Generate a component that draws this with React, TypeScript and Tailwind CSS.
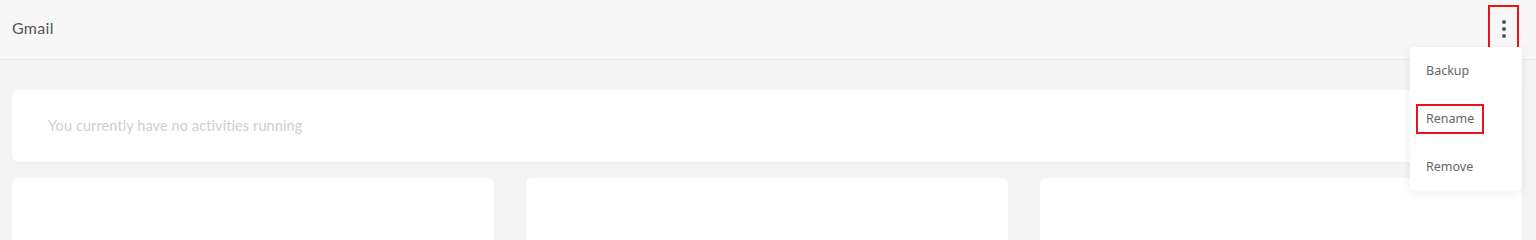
export default function App() {
  const items = ['Backup', 'Rename', 'Remove']

  return (
    <div className="h-screen overflow-hidden bg-[#f4f4f4] font-['Lato',sans-serif]">
      <header className="h-[60px] flex items-center justify-between pl-3 pr-[17px] border-b border-[#e9e9e9] bg-[#f7f7f7]">
        <span className="-mt-[3px] text-[16px] text-[#555] tracking-[0.3px]">Gmail</span>
        <div className="relative -mt-[2px]">
          <button className="w-[31px] h-[47px] border-2 border-[#e8141c] flex flex-col items-center justify-center gap-[3px]">
            <span className="w-[4px] h-[4px] rounded-full bg-[#555]" />
            <span className="w-[4px] h-[4px] rounded-full bg-[#555]" />
            <span className="w-[4px] h-[4px] rounded-full bg-[#555]" />
          </button>
          <div className="absolute -right-[3px] top-[42px] w-[112px] bg-white rounded-[4px] shadow-[0_2px_10px_rgba(0,0,0,0.08)] z-10 font-['Noto_Sans',sans-serif]">
            {items.map((item) =>
              item === 'Rename' ? (
                <div key={item} className="h-12 flex items-center pl-[6px]">
                  <span className="border-2 border-[#e8141c] px-2 py-[4px] text-[12.5px] text-[#666]">{item}</span>
                </div>
              ) : (
                <div key={item} className="h-12 flex items-center pl-4 text-[12.5px] text-[#666]">
                  {item}
                </div>
              )
            )}
          </div>
        </div>
      </header>

      <main className="px-3 pr-[14px] pt-[30px]">
        <div className="h-[72px] bg-white rounded-md shadow-[0_1px_3px_rgba(0,0,0,0.03)] flex items-center pl-9">
          <span className="text-[14.5px] text-[#cfcfcf] tracking-[0.1px]">You currently have no activities running</span>
        </div>
        <div className="grid grid-cols-3 gap-8 mt-4">
          <div className="h-40 bg-white rounded-md shadow-[0_1px_3px_rgba(0,0,0,0.03)]" />
          <div className="h-40 bg-white rounded-md shadow-[0_1px_3px_rgba(0,0,0,0.03)]" />
          <div className="h-40 bg-white rounded-md shadow-[0_1px_3px_rgba(0,0,0,0.03)]" />
        </div>
      </main>
    </div>
  )
}
